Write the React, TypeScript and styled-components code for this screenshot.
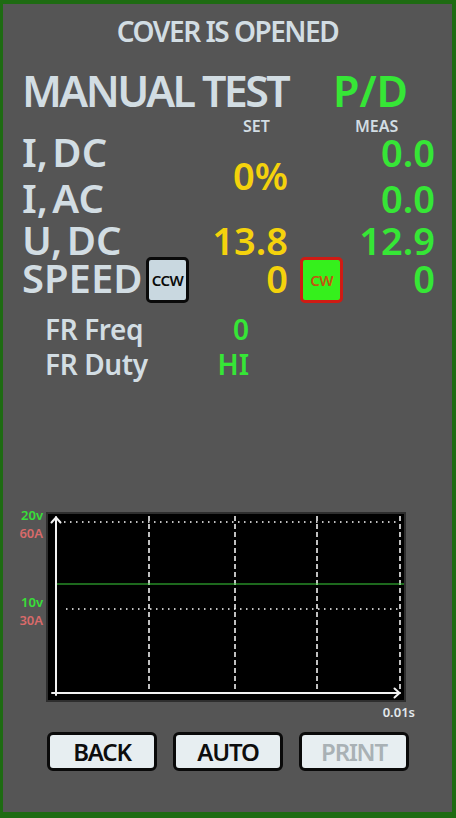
import React from "react";
import styled, { createGlobalStyle } from "styled-components";

const GlobalStyle = createGlobalStyle`
  html, body {
    margin: 0;
    padding: 0;
    background: #555555;
  }
  body {
    font-family: "Noto Sans", "Open Sans", "DejaVu Sans", sans-serif;
  }
`;

const LIGHT = "#d2dde3";
const GREEN = "#36e636";
const YELLOW = "#f4d20c";

const Frame = styled.div`
  width: 456px;
  height: 818px;
  box-sizing: border-box;
  border: 4px solid #1e6b12;
  border-left-width: 3px;
  border-bottom-width: 6px;
  background: #555555;
  display: flex;
  flex-direction: column;
  padding-top: 13px;
  font-weight: 600;
  overflow: hidden;
`;

const Title = styled.div`
  text-align: center;
  font-size: 28px;
  line-height: 28px;
  letter-spacing: -1.5px;
  color: ${LIGHT};
`;

const Header = styled.div`
  margin-top: 24px;
  padding-left: 19px;
  display: grid;
  grid-template-columns: 311px 1fr;
  font-size: 43px;
  line-height: 44px;
`;

const HeaderText = styled.div<{ $color: string; $tight?: boolean }>`
  color: ${(p) => p.$color};
  letter-spacing: ${(p) => (p.$tight ? "-2.6px" : "0")};
  white-space: nowrap;
`;

const ColumnCaptions = styled.div`
  margin-top: 5px;
  display: grid;
  grid-template-columns: 112px auto;
  padding-left: 240px;
  font-size: 16px;
  line-height: 16px;
  color: ${LIGHT};
`;

const Readings = styled.div`
  padding-left: 19px;
  display: grid;
  grid-template-columns: 124px 44px 98px 12px 42px 93px;
  grid-template-rows: 35px 46px 42px 38px;
`;

const Label = styled.div<{ $row: number }>`
  grid-column: 1;
  grid-row: ${(p) => p.$row};
  align-self: end;
  font-size: 40px;
  line-height: 34px;
  word-spacing: -6px;
  color: ${LIGHT};
  white-space: nowrap;
`;

const Value = styled.div<{ $row: number; $span?: number; $col: number; $color: string }>`
  grid-column: ${(p) => p.$col};
  grid-row: ${(p) => p.$row} / span ${(p) => p.$span ?? 1};
  align-self: ${(p) => (p.$span ? "center" : "end")};
  text-align: right;
  font-size: 38px;
  line-height: 34px;
  color: ${(p) => p.$color};
  white-space: nowrap;
`;

const DirButton = styled.div<{ $col: number; $active?: boolean }>`
  grid-column: ${(p) => p.$col};
  grid-row: 4;
  align-self: start;
  justify-self: start;
  width: 43px;
  height: 46px;
  box-sizing: border-box;
  border: 3px solid ${(p) => (p.$active ? "#cf1b14" : "#0a0a0a")};
  border-radius: 5px;
  background: ${(p) => (p.$active ? "#35f01c" : "#c9d8e0")};
  color: ${(p) => (p.$active ? "#c2560f" : "#0a0a0a")};
  font-size: 15px;
  font-weight: 600;
  letter-spacing: -0.6px;
  display: flex;
  align-items: center;
  justify-content: center;
`;

const FrList = styled.div`
  margin-top: 17px;
  padding-left: 42px;
  display: grid;
  grid-template-columns: 150px 54px;
  grid-auto-rows: 35px;
  font-size: 28px;
  line-height: 35px;
`;

const FrLabel = styled.div`
  color: ${LIGHT};
  letter-spacing: -0.4px;
  white-space: nowrap;
`;

const FrValue = styled.div`
  color: ${GREEN};
  text-align: right;
`;

const ChartRow = styled.div`
  margin-top: 124px;
  padding-left: 15px;
  display: flex;
  align-items: flex-start;
`;

const AxisLabels = styled.div`
  width: 25px;
  margin-right: 3px;
  display: flex;
  flex-direction: column;
  align-items: flex-end;
  font-size: 13px;
  line-height: 18px;
`;

const AxisGroup = styled.div`
  display: flex;
  flex-direction: column;
  align-items: flex-end;
  & + & {
    margin-top: 51px;
  }
`;

const AxisText = styled.span<{ $color: string }>`
  color: ${(p) => p.$color};
`;

const ChartBox = styled.div`
  margin-top: 6px;
  width: 360px;
  height: 190px;
  box-sizing: border-box;
  border: 2px solid #2e2e2e;
  background: #000;
  svg {
    display: block;
  }
`;

const TimeLabel = styled.div`
  margin-top: 2px;
  padding-right: 37px;
  text-align: right;
  font-size: 13px;
  line-height: 16px;
  color: #e2e8ec;
`;

const ButtonBar = styled.div`
  margin-top: 12px;
  padding-left: 44px;
  display: flex;
  gap: 16px;
`;

const SoftKey = styled.div<{ $disabled?: boolean }>`
  width: 110px;
  height: 39px;
  box-sizing: border-box;
  border: 3px solid #0a0a0a;
  border-radius: 6px;
  background: #e7eef1;
  color: ${(p) => (p.$disabled ? "#a9b1b5" : "#0d0d0d")};
  font-size: 24px;
  font-weight: 600;
  letter-spacing: -1.2px;
  display: flex;
  align-items: center;
  justify-content: center;
`;

function Scope() {
  const verticals = [101, 187, 269, 352];
  return (
    <svg width="356" height="186" viewBox="0 0 356 186">
      <line x1="16" y1="8" x2="352" y2="8" stroke="#fff" strokeWidth="1.5" strokeDasharray="1.5 4.5" />
      <line x1="18" y1="95" x2="352" y2="95" stroke="#fff" strokeWidth="1.5" strokeDasharray="1.5 4.5" />
      {verticals.map((x) => (
        <line key={x} x1={x} y1="2" x2={x} y2="178" stroke="#fff" strokeWidth="1.5" strokeDasharray="5 3" />
      ))}
      <line x1="9" y1="70" x2="357" y2="70" stroke="#3bd13b" strokeWidth="1" />
      <g stroke="#f2f2f2" strokeWidth="2" fill="none" strokeLinecap="round" strokeLinejoin="round">
        <line x1="8" y1="3" x2="8" y2="181" />
        <polyline points="3.5,8.5 8,3.5 12.5,8.5" />
        <line x1="4" y1="179" x2="352" y2="179" />
        <polyline points="346.5,174.5 351.5,179 346.5,183.5" />
      </g>
    </svg>
  );
}

export default function App() {
  return (
    <>
      <GlobalStyle />
      <Frame>
        <Title>COVER IS OPENED</Title>
        <Header>
          <HeaderText $color={LIGHT} $tight>MANUAL TEST</HeaderText>
          <HeaderText $color={GREEN}>P/D</HeaderText>
        </Header>
        <ColumnCaptions>
          <span>SET</span>
          <span>MEAS</span>
        </ColumnCaptions>
        <Readings>
          <Label $row={1}>I, DC</Label>
          <Label $row={2}>I, AC</Label>
          <Label $row={3}>U, DC</Label>
          <Label $row={4}>SPEED</Label>

          <Value $col={3} $row={1} $span={2} $color={YELLOW}>0%</Value>
          <Value $col={3} $row={3} $color={YELLOW}>13.8</Value>
          <DirButton $col={2}>CCW</DirButton>
          <Value $col={3} $row={4} $color={YELLOW}>0</Value>
          <DirButton $col={5} $active>CW</DirButton>

          <Value $col={6} $row={1} $color={GREEN}>0.0</Value>
          <Value $col={6} $row={2} $color={GREEN}>0.0</Value>
          <Value $col={6} $row={3} $color={GREEN}>12.9</Value>
          <Value $col={6} $row={4} $color={GREEN}>0</Value>
        </Readings>
        <FrList>
          <FrLabel>FR Freq</FrLabel>
          <FrValue>0</FrValue>
          <FrLabel>FR Duty</FrLabel>
          <FrValue>HI</FrValue>
        </FrList>
        <ChartRow>
          <AxisLabels>
            <AxisGroup>
              <AxisText $color="#38e038">20v</AxisText>
              <AxisText $color="#d86a6a">60A</AxisText>
            </AxisGroup>
            <AxisGroup>
              <AxisText $color="#38e038">10v</AxisText>
              <AxisText $color="#d86a6a">30A</AxisText>
            </AxisGroup>
          </AxisLabels>
          <ChartBox>
            <Scope />
          </ChartBox>
        </ChartRow>
        <TimeLabel>0.01s</TimeLabel>
        <ButtonBar>
          <SoftKey>BACK</SoftKey>
          <SoftKey>AUTO</SoftKey>
          <SoftKey $disabled>PRINT</SoftKey>
        </ButtonBar>
      </Frame>
    </>
  );
}
